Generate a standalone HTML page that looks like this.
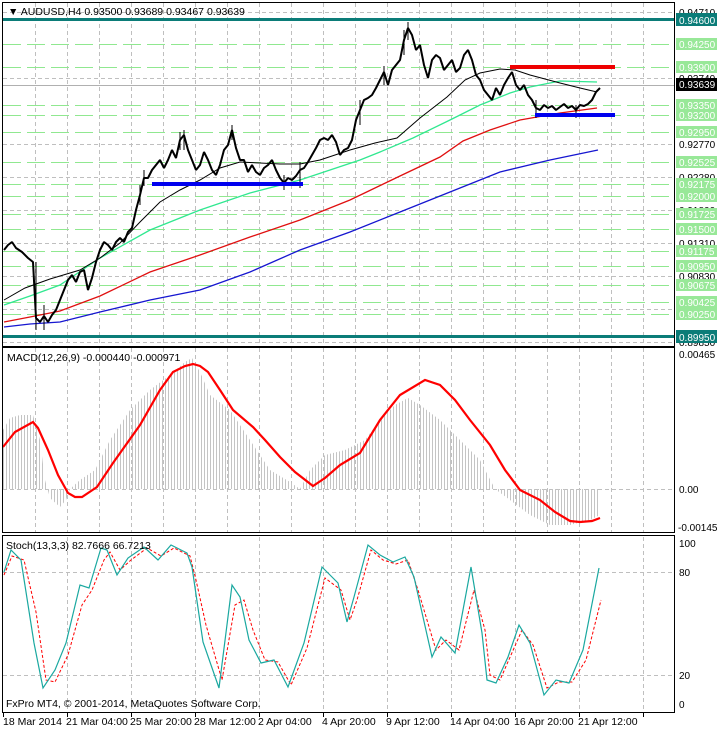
<!DOCTYPE html>
<html><head><meta charset="utf-8"><style>
html,body{margin:0;padding:0;background:#fff;width:717px;height:729px;overflow:hidden}
svg{display:block;font-family:"Liberation Sans",sans-serif;font-size:10.5px}
.ax{font-size:10px}
</style></head><body>
<svg width="717" height="729" viewBox="0 0 717 729" xmlns="http://www.w3.org/2000/svg">
<defs>
<pattern id="hb" width="3" height="10" patternUnits="userSpaceOnUse"><rect x="0" y="0" width="1" height="10" fill="#c4c4c4"/></pattern>
</defs>
<rect width="717" height="729" fill="#fff"/>
<g stroke="#bfbfbf" stroke-dasharray="4,3" stroke-width="1">
<path d="M35.5 3V345M67.5 3V345M99.5 3V345M131.5 3V345M163.5 3V345M195.5 3V345M227.5 3V345M259.5 3V345M291.5 3V345M323.5 3V345M355.5 3V345M387.5 3V345M419.5 3V345M451.5 3V345M483.5 3V345M515.5 3V345M547.5 3V345M579.5 3V345M611.5 3V345M643.5 3V345"/>
<path d="M35.5 348V532M67.5 348V532M99.5 348V532M131.5 348V532M163.5 348V532M195.5 348V532M227.5 348V532M259.5 348V532M291.5 348V532M323.5 348V532M355.5 348V532M387.5 348V532M419.5 348V532M451.5 348V532M483.5 348V532M515.5 348V532M547.5 348V532M579.5 348V532M611.5 348V532M643.5 348V532"/>
<path d="M67.5 537V711M131.5 537V711M195.5 537V711M259.5 537V711M323.5 537V711M387.5 537V711M451.5 537V711M515.5 537V711M579.5 537V711M643.5 537V711"/>
<path d="M3 12.5H674M3 78.5H674M3 144.5H674M3 177.5H674M3 210.5H674M3 243.5H674M3 276.5H674M3 309.5H674M3 342.5H674"/>
<path d="M3 489.5H674M3 572.5H674M3 675.5H674"/>
</g>
<g stroke="#90e890" stroke-dasharray="18,6" stroke-width="1">
<path d="M3 44.5H674M3 67.5H674M3 105.5H674M3 115.5H674M3 132.5H674M3 162.5H674M3 184.5H674M3 196.5H674M3 214.5H674M3 229.5H674M3 251.5H674M3 266.5H674M3 285.5H674M3 302.5H674M3 314.5H674"/>
</g>
<path d="M3 85.5H674" stroke="#b0b0b0"/>
<rect x="3" y="18" width="672" height="3" fill="#0b7c78"/>
<rect x="3" y="335" width="672" height="3" fill="#0b7c78"/>
<polyline fill="none" stroke="#1616d0" stroke-width="1.3" points="4,327 30,324 60,322 100,312 150,300 200,290 250,272 300,250 350,232 400,212 450,192 500,172 550,160 598,150"/>
<polyline fill="none" stroke="#e01010" stroke-width="1.3" points="4,322 30,317 60,311 100,296 150,272 200,255 250,237 300,220 350,200 400,176 440,157 463,141 490,130 520,120 537,117 560,113 597,108"/>
<polyline fill="none" stroke="#30e890" stroke-width="1.3" points="4,305 30,296 60,285 100,258 150,230 200,210 250,193 300,180 330,170 360,160 380,152 413,138 450,120 480,105 510,93 530,87 560,81 597,82"/>
<polyline fill="none" stroke="#000" stroke-width="1" points="4,300 25,288 50,279 80,270 100,258 120,243 140,222 160,202 180,190 200,180 220,168 240,162 260,163 280,164 300,164 320,160 350,150 375,143 397,138 420,118 447,97 465,80 480,73 500,69 515,70 530,75 545,79 560,83 580,88 597,92"/>
<polyline fill="none" stroke="#000" stroke-width="2" stroke-linejoin="bevel" points="4,250 8,245 12,242 16,248 22,252 28,258 33,262 36,318 40,322 44,316 48,322 52,315 56,310 60,300 64,290 68,280 72,275 76,282 80,272 84,270 88,290 92,278 96,262 100,250 104,242 108,245 112,250 116,242 120,238 124,242 128,232 132,228 136,210 140,195 144,178 148,178 152,170 156,165 160,160 164,168 168,160 172,150 176,158 180,140 184,135 188,150 192,160 196,170 200,165 204,152 208,160 212,170 216,175 220,165 224,150 228,145 232,130 236,148 240,160 244,160 248,172 252,165 256,172 260,175 264,168 268,165 272,160 276,170 280,178 284,183 288,178 292,180 296,176 300,170 304,168 308,162 312,155 316,148 320,140 324,138 328,140 332,135 336,142 340,155 344,150 348,148 352,140 356,120 360,110 364,100 368,98 372,95 376,88 380,80 384,72 388,85 392,70 396,65 400,60 404,40 408,28 412,35 416,50 420,45 424,65 428,78 432,60 436,55 440,58 444,70 448,65 452,60 456,72 460,68 464,55 468,50 472,60 476,75 480,80 484,90 488,95 492,100 496,88 500,95 504,85 508,78 512,72 516,85 520,90 524,85 528,95 532,100 536,108 540,110 544,105 548,108 552,106 556,110 560,107 564,104 568,108 572,106 576,110 580,105 584,106 588,104 592,100 596,92 600,88"/>
<g stroke="#000" stroke-width="1">
<path d="M36 262V330M44 305V330M140 185V205M184 130V150M232 125V140M408 22V40M404 30V55M144 170V186M180 132V150M300 162V188M284 175V190M360 100V125M384 66V85M536 100V118M576 105V118"/>
</g>
<rect x="152" y="182" width="151" height="4" fill="#0000ee"/>
<rect x="535" y="113" width="80" height="4" fill="#0000ee"/>
<rect x="510" y="65" width="105" height="4" fill="#ee0000"/>
<polygon fill="url(#hb)" points="3,489 3,430 10,418 20,415 33,415 40,440 45,480 50,498 60,507 66,500 70,489 80,480 95,470 110,440 130,410 150,390 170,375 185,362 192,358 200,372 210,395 230,410 250,440 270,470 290,482 300,489 310,470 325,455 345,450 365,440 380,420 395,405 408,398 420,405 440,420 460,440 480,460 495,489 510,500 530,515 550,525 570,525 590,520 600,515 600,489"/>
<polyline fill="none" stroke="#f00" stroke-width="2.2" points="3,447 15,432 33,422 38,428 48,450 58,475 68,493 75,497 82,497 97,487 113,463 140,425 160,390 173,372 185,366 193,364 200,366 208,372 220,390 233,410 253,427 265,440 280,457 295,472 313,486 325,478 340,465 360,453 380,420 400,395 425,380 440,385 455,400 470,420 490,445 505,470 520,490 540,500 555,512 570,521 580,522 592,521 600,518"/>
<polyline fill="none" stroke="#f00" stroke-width="1" stroke-dasharray="3,2" points="4,575 12,556 24,560 36,612 46,680 55,682 68,655 82,605 92,590 104,560 110,552 120,570 131,560 147,548 161,556 174,548 190,556 196,580 206,625 222,680 235,605 244,600 253,630 265,660 278,662 291,685 307,648 325,578 341,590 350,620 357,600 371,550 383,560 396,564 408,560 418,590 436,650 446,640 459,650 474,590 485,630 490,675 500,680 511,655 522,630 533,645 547,688 559,682 572,682 586,660 601,600"/>
<polyline fill="none" stroke="#1aa8a0" stroke-width="1.2" points="4,572 11,550 21,560 34,643 43,688 55,670 66,643 80,585 89,588 101,548 107,550 117,575 128,558 144,547 158,560 171,545 187,553 192,567 203,642 219,688 232,585 240,597 249,640 261,663 274,660 288,687 304,643 322,567 338,583 347,622 354,597 368,545 380,555 393,562 405,557 414,577 432,657 441,637 455,653 471,567 482,633 487,680 496,683 508,657 519,625 530,643 544,695 556,680 569,683 583,650 599,568"/>
<g fill="none" stroke="#000" stroke-width="1">
<rect x="2.5" y="2.5" width="672" height="344"/>
<rect x="2.5" y="347.5" width="672" height="185"/>
<rect x="2.5" y="535.5" width="672" height="177"/>
</g>
<g stroke="#000"><path d="M3.5 713V717M67.5 713V717M131.5 713V717M195.5 713V717M259.5 713V717M323.5 713V717M387.5 713V717M451.5 713V717M515.5 713V717M579.5 713V717M643.5 713V717"/></g>
<text x="8" y="15" fill="#000">&#9660; AUDUSD,H4  0.93500 0.93689 0.93467 0.93639</text>
<text x="7" y="361" fill="#000">MACD(12,26,9) -0.000440 -0.000971</text>
<text x="6" y="549" fill="#000">Stoch(13,3,3) 82.7666 66.7213</text>
<text x="6" y="707" fill="#000">FxPro MT4, © 2001-2014, MetaQuotes Software Corp.</text>
<g fill="#000">
<text x="3" y="725">18 Mar 2014</text><text x="66" y="725">21 Mar 04:00</text><text x="130" y="725">25 Mar 20:00</text><text x="194" y="725">28 Mar 12:00</text><text x="258" y="725">2 Apr 04:00</text><text x="322" y="725">4 Apr 20:00</text><text x="386" y="725">9 Apr 12:00</text><text x="450" y="725">14 Apr 04:00</text><text x="514" y="725">16 Apr 20:00</text><text x="578" y="725">21 Apr 12:00</text>
</g>
<g fill="#000" class="ax">
<text x="679" y="16">0.94710</text><text x="679" y="82">0.93740</text><text x="679" y="148">0.92770</text><text x="679" y="181">0.92280</text><text x="679" y="214">0.91800</text><text x="679" y="247">0.91310</text><text x="679" y="280">0.90830</text><text x="679" y="313">0.90350</text><text x="679" y="346">0.89850</text>
<text x="679" y="358">0.00465</text><text x="679" y="493">0.00</text><text x="678" y="531">-0.001452</text>
<text x="679" y="547">100</text><text x="679" y="576">80</text><text x="679" y="679">20</text><text x="679" y="708">0</text>
</g>
<g fill="#98e898">
<rect x="676" y="38" width="41" height="12"/><rect x="676" y="61" width="41" height="12"/><rect x="676" y="99" width="41" height="12"/><rect x="676" y="109" width="41" height="12"/><rect x="676" y="126" width="41" height="12"/><rect x="676" y="156" width="41" height="12"/><rect x="676" y="178" width="41" height="12"/><rect x="676" y="190" width="41" height="12"/><rect x="676" y="208" width="41" height="12"/><rect x="676" y="223" width="41" height="12"/><rect x="676" y="245" width="41" height="12"/><rect x="676" y="260" width="41" height="12"/><rect x="676" y="279" width="41" height="12"/><rect x="676" y="296" width="41" height="12"/><rect x="676" y="308" width="41" height="12"/>
</g>
<rect x="676" y="13" width="41" height="13" fill="#0b7c78"/>
<rect x="676" y="330" width="41" height="13" fill="#0b7c78"/>
<rect x="676" y="78" width="41" height="13" fill="#000"/>
<g fill="#fff" class="ax">
<text x="679" y="24">0.94600</text><text x="679" y="341">0.89950</text><text x="679" y="88">0.93639</text>
<text x="679" y="48">0.94250</text><text x="679" y="71">0.93900</text><text x="679" y="109">0.93350</text><text x="679" y="119">0.93200</text><text x="679" y="136">0.92950</text><text x="679" y="166">0.92525</text><text x="679" y="188">0.92175</text><text x="679" y="200">0.92000</text><text x="679" y="218">0.91725</text><text x="679" y="233">0.91500</text><text x="679" y="255">0.91175</text><text x="679" y="270">0.90950</text><text x="679" y="289">0.90675</text><text x="679" y="306">0.90425</text><text x="679" y="318">0.90250</text>
</g>
</svg>
</body></html>
